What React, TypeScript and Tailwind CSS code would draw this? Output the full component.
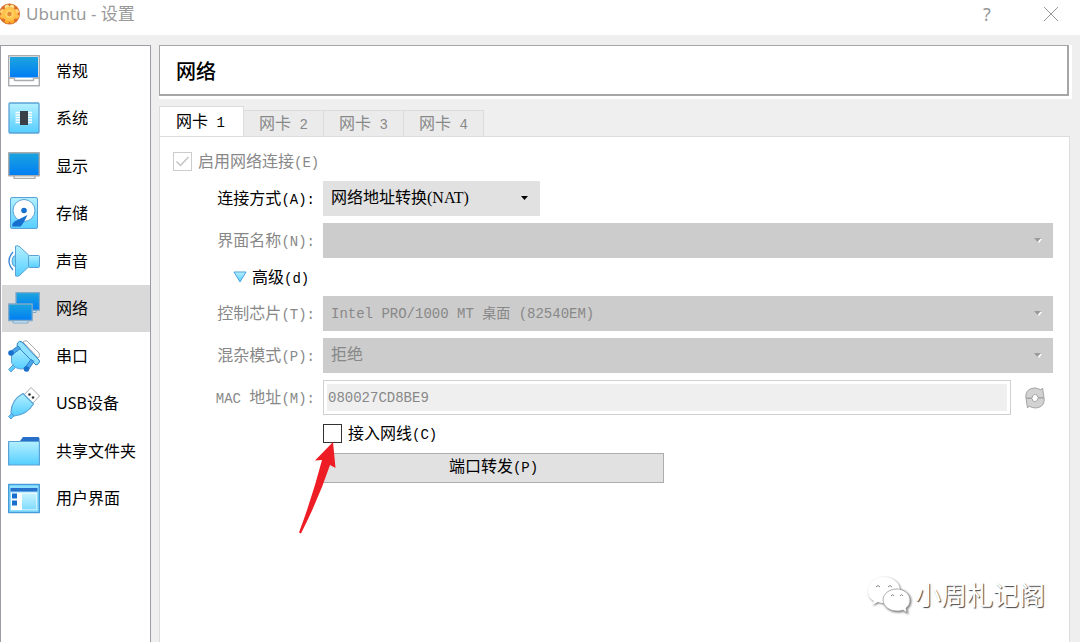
import type { ReactNode } from "react";

const OUTLINE = "#5aa2d6";

const CATEGORIES: { name: string; icon: ReactNode }[] = [
  { name: "常规", icon: <GeneralIcon /> },
  { name: "系统", icon: <SystemIcon /> },
  { name: "显示", icon: <DisplayIcon /> },
  { name: "存储", icon: <StorageIcon /> },
  { name: "声音", icon: <AudioIcon /> },
  { name: "网络", icon: <NetworkIcon /> },
  { name: "串口", icon: <SerialIcon /> },
  { name: "USB设备", icon: <UsbIcon /> },
  { name: "共享文件夹", icon: <FolderIcon /> },
  { name: "用户界面", icon: <InterfaceIcon /> },
];

export default function App() {
  return (
    <div className="flex min-h-screen flex-col bg-[#efefef] font-['Noto_Sans','Noto_Sans_CJK_SC',sans-serif] text-base text-black">
      <Gradients />
      <TitleBar />
      <div className="flex flex-1 pt-[10px]">
        <Sidebar selected="网络" />
        <main className="flex min-w-0 flex-1 flex-col pr-[10px] pl-2">
          <div className="-mr-0.5 border-r-3 border-b-3 border-white">
            <h1 className="flex h-[51px] items-center border border-r-2 border-b-2 border-[#a6a6a6] bg-white pt-1 pl-4 text-xl font-medium">
              网络
            </h1>
          </div>
          <Tabs />
          <AdapterPanel />
        </main>
      </div>
    </div>
  );
}

function TitleBar() {
  return (
    <header className="flex h-[35px] items-center bg-white pb-2 text-[#999]">
      <GearIcon />
      <span className="ml-1 flex-1 text-[17px] leading-7">Ubuntu - 设置</span>
      <button type="button" aria-label="帮助" className="mr-9 w-7 text-lg leading-7">
        ?
      </button>
      <button type="button" aria-label="关闭" className="mr-[15px] flex w-7 justify-center">
        <svg viewBox="0 0 16 16" className="h-4 w-4" stroke="#999" fill="none">
          <path d="M1 1l14 14M15 1L1 15" />
        </svg>
      </button>
    </header>
  );
}

function Sidebar({ selected }: { selected: string }) {
  return (
    <nav className="w-[151px] shrink-0 border border-b-0 border-[#9a9da6] bg-white pt-px pl-px">
      <ul className="grid h-[475px] grid-rows-10">
        {CATEGORIES.map(({ name, icon }) => (
          <li key={name} className={name === selected ? "bg-[#d9d9d9]" : ""}>
            <a href="#" className="flex h-full items-center gap-4 pl-1.5 whitespace-nowrap">
              {icon}
              {name}
            </a>
          </li>
        ))}
      </ul>
    </nav>
  );
}

function Tabs() {
  return (
    <div role="tablist" className="mt-[7px] flex items-end">
      <button
        type="button"
        role="tab"
        aria-selected="true"
        className="relative -mb-px h-[31px] w-[85px] border border-b-0 border-[#dcdcdc] bg-white pb-0.5 pl-4 text-left"
      >
        网卡<Mono> 1</Mono>
      </button>
      {["2", "3", "4"].map((n) => (
        <button
          key={n}
          type="button"
          role="tab"
          aria-selected="false"
          className="h-[26px] w-20 border border-b-0 border-l-0 border-[#dcdcdc] bg-[#ebebeb] pb-1 text-[#888]"
        >
          网卡<Mono> {n}</Mono>
        </button>
      ))}
    </div>
  );
}

function AdapterPanel() {
  return (
    <section className="relative flex-1 border border-b-0 border-[#dcdcdc] bg-white pt-3 pr-4 pl-[13px]">
      <label className="mb-2 flex h-6 items-center gap-1.5 text-[#888]">
        <span className="relative h-[19px] w-[19px]">
          <input
            type="checkbox"
            defaultChecked
            disabled
            className="block h-full w-full appearance-none border border-[#ccc] bg-white"
          />
          <svg
            viewBox="0 0 19 19"
            className="pointer-events-none absolute inset-0"
            fill="none"
            stroke="#c4c4c4"
            strokeWidth="1.5"
          >
            <path d="M3.500 9.500l4 4 8-8.500" />
          </svg>
        </span>
        <span>
          启用网络连接<Mono>(E)</Mono>
        </span>
      </label>

      <div className="grid grid-cols-[142px_1fr] items-center gap-x-2 gap-y-[7px]">
        <FieldLabel id="attached" text="连接方式" hotkey="A" />
        <Combo id="attached" className="w-[217px]">
          网络地址转换(NAT)
        </Combo>

        <FieldLabel id="name" text="界面名称" hotkey="N" disabled />
        <Combo id="name" disabled />

        <button
          type="button"
          className="col-span-2 ml-[60px] flex h-6 items-center gap-[5px] justify-self-start"
        >
          <svg viewBox="0 0 14 12" className="h-3 w-3.5">
            <path d="M1 1h12L7 11z" fill="url(#cyan)" stroke="#4aa3df" strokeLinejoin="round" />
          </svg>
          <span>
            高级<Mono>(d)</Mono>
          </span>
        </button>

        <FieldLabel id="chip" text="控制芯片" hotkey="T" disabled />
        <Combo id="chip" disabled mono>
          Intel PRO/1000 MT 桌面 (82540EM)
        </Combo>

        <FieldLabel id="promiscuous" text="混杂模式" hotkey="P" disabled />
        <Combo id="promiscuous" disabled>
          拒绝
        </Combo>

        <FieldLabel id="mac" text="地址" prefix="MAC " hotkey="M" disabled />
        <div className="flex items-center">
          <input
            id="mac"
            disabled
            defaultValue="080027CD8BE9"
            className="h-[35px] min-w-0 flex-1 border border-[#d0d0d0] bg-[#efefef] px-1 font-['Liberation_Mono',monospace] text-sm text-[#888] shadow-[inset_0_0_0_3px_white]"
          />
          <button type="button" disabled aria-label="刷新" className="mr-2 ml-3.5">
            <RefreshIcon />
          </button>
        </div>

        <div className="relative col-start-2">
          <label className="flex h-[23px] w-fit items-center gap-1.5">
            <input type="checkbox" className="h-[19px] w-[19px] appearance-none border border-[#333] bg-white" />
            <span className="pb-0.5">
              接入网线<Mono>(C)</Mono>
            </span>
          </label>
          <PointerArrow />
        </div>

        <button
          type="button"
          className="col-start-2 mt-px h-[30px] w-[341px] border border-[#adadad] bg-[#e1e1e1] pb-1 leading-6"
        >
          端口转发<Mono>(P)</Mono>
        </button>
      </div>

      <Watermark />
    </section>
  );
}

function Mono({ children }: { children: ReactNode }) {
  return <span className="font-['Liberation_Mono',monospace] text-sm whitespace-pre">{children}</span>;
}

type FieldLabelProps = {
  id: string;
  text: string;
  hotkey: string;
  prefix?: string;
  disabled?: boolean;
};

function FieldLabel({ id, text, hotkey, prefix, disabled }: FieldLabelProps) {
  return (
    <label htmlFor={id} className={`pb-0.5 text-right whitespace-nowrap ${disabled ? "text-[#888]" : ""}`}>
      {prefix && <Mono>{prefix}</Mono>}
      {text}
      <Mono>({hotkey}):</Mono>
    </label>
  );
}

type ComboProps = {
  id: string;
  children?: string;
  className?: string;
  disabled?: boolean;
  mono?: boolean;
};

function Combo({ id, children, className = "", disabled, mono }: ComboProps) {
  return (
    <div className={`relative ${className}`}>
      <select
        id={id}
        disabled={disabled}
        className={`block h-[35px] w-full appearance-none px-2 disabled:opacity-100 ${
          disabled ? "bg-[#ccc] text-[#888]" : "bg-[#e1e1e1] text-black"
        } ${
          mono
            ? "font-['Liberation_Mono','Noto_Sans_CJK_SC',monospace] text-sm"
            : "pb-0.5 font-['Liberation_Serif','Noto_Sans_CJK_SC',serif]"
        }`}
      >
        <option>{children}</option>
      </select>
      <svg viewBox="0 0 8 6" className="pointer-events-none absolute top-3.5 right-[11px] h-1.5 w-2">
        {disabled && <path d="M2 2h6L5 6z" fill="#fff" />}
        <path d="M0 1h7L3.500 5z" fill={disabled ? "#9a9a9a" : "#000"} />
      </svg>
    </div>
  );
}

function PointerArrow() {
  return (
    <svg viewBox="0 0 38 92" className="pointer-events-none absolute top-5 -left-6 z-10 h-[92px] w-[38px]">
      <path d="M34 0L16 18.500l7-.5Q13 56 0 90.500l2 1Q20 56 31 23l5.500 3z" fill="#ee1c25" />
    </svg>
  );
}

function Watermark() {
  return (
    <div className="pointer-events-none absolute right-6 bottom-6 flex items-center gap-1 text-[26px] leading-[46px] text-white [text-shadow:1px_1px_1px_#444]">
      <svg viewBox="0 0 44 38" className="h-[38px] w-11 drop-shadow-[1px_1px_1px_#777]">
        <path
          d="M17 1C8 1 1 7 1 15c0 5 2 8 6 10l-2 4 6-3c2 1 5 1 8 1 8 0 14-5 14-13C33 7 26 1 17 1z"
          fill="#fff"
        />
        <path
          d="M30 13c-8 0-14 5-14 11s6 11 14 11c2 0 4 0 6-1l4 3-1-5c3-2 4-5 4-8 0-6-6-11-13-11z"
          fill="#fff"
          stroke="#999"
          strokeWidth=".8"
        />
        <path d="M9 11q2-3 4 0M21 11q2-3 4 0M24 20q2-3 3 0M33 20q2-3 3 0" fill="none" stroke="#888" />
      </svg>
      小周札记阁
    </div>
  );
}

// Shared paint servers for the icon set
function Gradients() {
  return (
    <svg className="absolute h-0 w-0" aria-hidden="true">
      <defs>
        <linearGradient id="screen" x1="0" y1="0" x2="0" y2="1">
          <stop offset="0" stopColor="#1ca5de" />
          <stop offset="1" stopColor="#007df5" />
        </linearGradient>
        <linearGradient id="cyan" x1="0" y1="0" x2="0" y2="1">
          <stop offset="0" stopColor="#b4f0ff" />
          <stop offset="1" stopColor="#55ceff" />
        </linearGradient>
        <linearGradient id="gear" x1="0" y1="0" x2="0" y2="1">
          <stop offset="0" stopColor="#ffe08a" />
          <stop offset="1" stopColor="#ffab2e" />
        </linearGradient>
      </defs>
    </svg>
  );
}

function Icon({ children }: { children: ReactNode }) {
  return (
    <svg viewBox="0 0 32 32" className="h-8 w-8 shrink-0" aria-hidden="true" strokeLinejoin="round">
      {children}
    </svg>
  );
}

function GearIcon() {
  return (
    <svg viewBox="0 0 22 24" className="h-6 w-[22px] shrink-0" aria-hidden="true">
      <circle cx="9.500" cy="12" r="10.500" fill="#d96f2b" />
      <g stroke="url(#gear)" strokeWidth="4.500" strokeLinecap="round">
        <path d="M7 4.800l5 14.400M12 4.800L7 19.200M2.300 9.500l14.400 5M2.300 14.500l14.400-5" />
      </g>
      <circle cx="9.500" cy="12" r="7" fill="#ffc247" />
      <circle cx="9.500" cy="12" r="4.500" fill="#ffd062" />
      <circle cx="9.500" cy="12" r="2.200" fill="#e08a3a" />
    </svg>
  );
}

function GeneralIcon() {
  return (
    <Icon>
      <path d="M.7.700h30.600v30H.7z" fill="#fff" stroke="#a9abad" strokeWidth="1.400" />
      <path d="M2 2h28v20.500H2z" fill="url(#screen)" />
      <path d="M1 23h5.500v2.500h19V23H31" fill="none" stroke="#a9abad" strokeWidth="1.300" />
    </Icon>
  );
}

function SystemIcon() {
  return (
    <Icon>
      <rect x="1" y="1" width="30" height="30" rx="1" fill="url(#cyan)" stroke={OUTLINE} strokeWidth="1.300" />
      <path
        d="M7.500 10.500h16.500M7.500 13h16.500M7.500 15.500h16.500M7.500 18h16.500M7.500 20.500h16.500"
        stroke="#fff"
        strokeWidth="1.400"
      />
      <path d="M12 9h8v14h-8z" fill="#3a4048" />
    </Icon>
  );
}

function DisplayIcon() {
  return (
    <Icon>
      <path d="M6 25h21v3.300H6z" fill="#fff" stroke="#a9abad" strokeWidth="1.300" />
      <path d="M.7 2.700h30.600v23H.7z" fill="url(#screen)" stroke="#a9abad" strokeWidth="1.400" />
    </Icon>
  );
}

function StorageIcon() {
  return (
    <Icon>
      <rect x="2.500" y=".5" width="27" height="31" rx="1.500" fill="url(#cyan)" stroke={OUTLINE} />
      <circle cx="16" cy="13.500" r="11" fill="#fff" stroke={OUTLINE} />
      <circle cx="16" cy="13.500" r="2.800" fill="#176fce" />
      <path d="M19.500 18L6.500 24.500q-3 2.500-2 5h8q3-3 7-11.500z" fill="#176fce" />
    </Icon>
  );
}

function AudioIcon() {
  return (
    <Icon>
      <path d="M5 7Q-3 16 5 25" fill="none" stroke="#3c86cf" strokeWidth="1.300" />
      <path d="M8 10q-4 1-4 6t4 6z" fill="#79dcff" stroke={OUTLINE} />
      <path d="M7.500 1Q10 0 12 2l9 8.500v11L12 30q-2 2-4.500 1z" fill="url(#cyan)" stroke={OUTLINE} />
      <rect x="20.500" y="10.500" width="11" height="12" rx="1" fill="url(#cyan)" stroke={OUTLINE} />
    </Icon>
  );
}

function NetworkIcon() {
  return (
    <Icon>
      <path d="M8 .7h23.500v17.500H8z" fill="url(#screen)" stroke="#7fa8c8" strokeWidth="1.300" />
      <path d="M24 18.500h4v2h-4zM5 28.500h15V31H5z" fill="#cfe9fa" stroke="#7fa8c8" />
      <path d="M.7 12h23.500v16.500H.7z" fill="url(#screen)" stroke="#7fa8c8" strokeWidth="1.300" />
    </Icon>
  );
}

function SerialIcon() {
  return (
    <Icon>
      <path d="M15 2q2-2 4-1l12 12q2 3-1 5z" fill="#fff" stroke="#aaa" />
      <path d="M.5 29.500L5 25l2.500 2.500L3 32z" fill="#5fcaff" stroke={OUTLINE} />
      <path d="M11 6L3.500 13v9.500q3 6.500 10 6.500l6-1 7-7z" fill="url(#cyan)" stroke={OUTLINE} />
      <path d="M9.500 3q2-3 4.500-1l17 18q1.500 2-1 4l-2 1L9 6z" fill="#8fe2ff" stroke="#2f83ca" />
      <path d="M10 6l2.500 2.500-8 6-2-3zM26 21.500l-3-2-6 8 3.500 2z" fill="#4aa6ea" stroke="#2f83ca" />
      <circle cx="3" cy="13" r="2.800" fill="#176fce" />
      <circle cx="18.500" cy="29" r="2.800" fill="#176fce" />
    </Icon>
  );
}

function UsbIcon() {
  return (
    <Icon>
      <path d="M16 8l7-7.500 8.500 8.500-7 7.500z" fill="#fff" stroke="#aaa" />
      <circle cx="21.500" cy="7.500" r="1.300" fill="#333" />
      <circle cx="25" cy="10.500" r="1.300" fill="#333" />
      <path d="M.5 29.500L4 26l2.500 2.500L3 32z" fill="#5fcaff" stroke={OUTLINE} />
      <path
        d="M15 6.500L25.500 17q-7 11-19.500 12l-3-3Q3 13 15 6.500z"
        fill="url(#cyan)"
        stroke={OUTLINE}
        strokeWidth="1.200"
      />
    </Icon>
  );
}

function FolderIcon() {
  return (
    <Icon>
      <path d="M12 6l3-4h15q1.500 0 1.500 2v4H12z" fill="#286fc9" />
      <path d="M.6 6.500h30.800v23.500H.6z" fill="url(#cyan)" stroke={OUTLINE} strokeWidth="1.200" />
    </Icon>
  );
}

function InterfaceIcon() {
  return (
    <Icon>
      <path d="M.7 2.500h30.600v28H.7z" fill="#8be0ff" stroke="#459cd8" strokeWidth="1.400" />
      <path d="M3 10.500h26V28H3z" fill="#fff" />
      <path d="M2.500 6h27v3.500h-27z" fill="#286fc9" />
      <path d="M4 11.500h5v5H4zM4 18.500h5v5H4z" fill="#176fce" />
      <path d="M14 11.500h14.500v16H14z" fill="url(#cyan)" opacity=".75" />
    </Icon>
  );
}

function RefreshIcon() {
  return (
    <svg viewBox="0 0 20 22" className="h-[22px] w-5" aria-hidden="true">
      <g fill="#d2d2d2" stroke="#a5a5a5" strokeLinejoin="round">
        <path d="M.8 11Q0 2 9 1q4 0 7 2l1.500-2L19 10.500h-6L12 8q-4-2-5 3z" />
        <path d="M19.200 11q.8 9-8.200 10-4 0-7-2l-1.500 2L1 11.500h6l1 2.500q4 2 5-3z" />
      </g>
      <path d="M10.500 7.500l-3 3.500h2v3.500l3.500-4h-2.500z" fill="#fff" />
    </svg>
  );
}
